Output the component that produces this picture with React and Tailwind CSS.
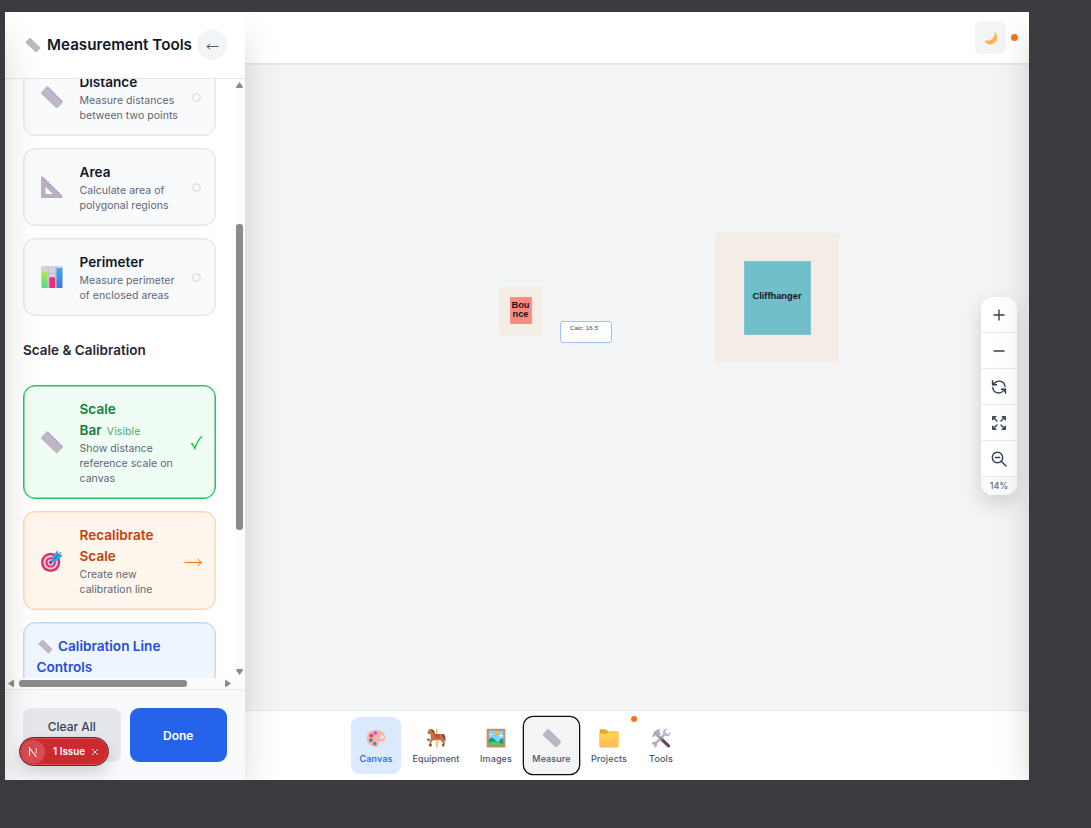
import React from "react";

const Ruler = ({ size = 24 }) => (
  <svg width={size} height={size} viewBox="0 0 32 32" className="shrink-0">
    <defs>
      <linearGradient id="rulerFill" x1="0" y1="1" x2="1" y2="0">
        <stop offset="0" stopColor="#b3aeb7" />
        <stop offset="1" stopColor="#c9c3d0" />
      </linearGradient>
    </defs>
    <path d="M1.6 9.6 8.4 2.2Q9.6 1 10.9 2L30.2 21.2Q31.2 22.4 30.2 23.6L23.6 30.2Q22.4 31.2 21.2 30.2L1.6 11.8Q.7 10.7 1.6 9.6Z" fill="url(#rulerFill)" />
    <path d="M10 3.6 29.2 22.6" stroke="#a57be6" strokeWidth="1.800" strokeDasharray="1.5 2.6" />
  </svg>
);

const Triangle = () => (
  <svg width="22" height="22" viewBox="0 0 32 32">
    <path fillRule="evenodd" d="M0 1.5Q0 0 1.5 .5L31.5 30Q32 32 30 32H1.5Q0 32 0 30.5ZM6.5 15.5V24.5Q6.5 26 8 26H17Z" fill="#b7b1bc" />
    <path d="M3.500 2.500 30.500 29" stroke="#9b6fe0" strokeWidth="2" strokeDasharray="1.8 2.6" />
  </svg>
);

const BarChart = () => (
  <svg width="22" height="22" viewBox="0 0 32 32">
    <defs>
      <linearGradient id="barGreen" x1="0" y1="0" x2="0" y2="1"><stop offset="0" stopColor="#b4e94e" /><stop offset="1" stopColor="#50d68f" /></linearGradient>
      <linearGradient id="barBlue" x1="0" y1="0" x2="0" y2="1"><stop offset="0" stopColor="#35b1f2" /><stop offset="1" stopColor="#4175d8" /></linearGradient>
    </defs>
    <rect width="32" height="32" rx="2" fill="#d7d0dd" />
    <path d="M0 10.500H32M0 21.500H32M10.500 0V32M21.500 0V32" stroke="#bcb4c5" strokeWidth="1" />
    <rect x="1" y="7.500" width="8.500" height="24.500" rx="1" fill="url(#barGreen)" />
    <rect x="12" y="16.500" width="8.500" height="15.500" rx="1" fill="#ec2d78" />
    <rect x="22.500" y="3" width="8.500" height="29" rx="1" fill="url(#barBlue)" />
  </svg>
);

const Target = () => (
  <svg width="22" height="22" viewBox="0 0 32 32">
    <circle cx="14" cy="18" r="14" fill="#e02f66" />
    <circle cx="14" cy="18" r="10.500" fill="#dccbe0" />
    <circle cx="14" cy="18" r="7.500" fill="#d92d63" />
    <circle cx="14" cy="18" r="4.500" fill="#dccbe0" />
    <circle cx="14" cy="18" r="2.200" fill="#b52456" />
    <path d="M14 18 23 9" stroke="#2576b8" strokeWidth="2.200" />
    <path d="M17 9 24 .5 25.500 6 32 7.500 22.500 16 16 16.500Z" fill="#2da2ee" />
    <path d="M19 13 29 3.500" stroke="#1e7bd0" strokeWidth="1.500" />
  </svg>
);

const Palette = () => (
  <svg width="20" height="20" viewBox="0 0 32 32">
    <path d="M16 3C7 3 1 8.500 1 16c0 8 6 14 14 14 4 0 5.500-2 5-5-.5-3.500 2-4.500 5-3.500 4 1.200 6-1.500 6-5C31 8.500 25 3 16 3Z" fill="#fbb3a2" />
    <circle cx="15" cy="8" r="2.900" fill="#b657d8" />
    <circle cx="8.500" cy="12" r="3" fill="#f0347f" />
    <circle cx="8" cy="19.500" r="3" fill="#2f9aa8" />
    <circle cx="14" cy="25" r="2.900" fill="#3a8be8" />
    <circle cx="25.500" cy="14.500" r="3.200" fill="#dbeafe" />
  </svg>
);

const Horse = () => (
  <svg width="20" height="20" viewBox="0 0 32 32">
    <rect x="16" y="1" width="2.400" height="30" fill="#f3c05c" />
    <path d="M4 3 7 1 11 3.500Q14 7 14.500 9.500L24 9.500Q28 9.500 28.500 14L28.500 19 30.500 24 28.500 29 26 29 27 24 23 19.500 12 19.500 8.500 22 9 29 6 29 5.500 22 8 17Q6.500 13 7.500 9.500L3.500 10 2.500 8Z" fill="#bb7549" />
    <path d="M8 1 12 3Q14.500 6 14.500 9.500L11 7ZM25 9Q31 9 31 16L31.500 22 28 18Z" fill="#80493c" />
    <path d="M13 9.500H22V16Q17 18 13.500 15Z" fill="#e0453a" />
    <path d="M4.500 26H9V29H5ZM25.500 26 29.500 26 29 29H25.500ZM2 17 7 17 5 20.500 2 20.500Z" fill="#80493c" />
    <rect x="16.200" y="18.500" width="2.200" height="12.500" fill="#f3c05c" />
  </svg>
);

const Picture = () => (
  <svg width="20" height="20" viewBox="0 0 32 32">
    <rect x="1" y="1" width="30" height="30" rx="1.500" fill="#cf8c62" />
    <rect x="4.500" y="4.500" width="23" height="23" fill="#7bd4fb" />
    <circle cx="17.500" cy="9" r="3.200" fill="#fcb92c" />
    <path d="M5 11Q8 7 11 11ZM20 13Q24 8 27.500 12V14Z" fill="#e9f8ff" />
    <path d="M4.500 18Q9 12 13.500 18L19 23 24 17Q26 16 27.500 18V27.500H4.500Z" fill="#1f9b78" />
    <path d="M4.500 24Q14 18 27.500 26V27.500H4.500Z" fill="#55c85f" />
  </svg>
);

const Folder = () => (
  <svg width="20" height="20" viewBox="0 0 32 32">
    <defs>
      <linearGradient id="folderFill" x1="0" y1="0" x2="0" y2="1"><stop offset="0" stopColor="#ffd84a" /><stop offset="1" stopColor="#fdb95e" /></linearGradient>
    </defs>
    <path d="M1 4Q1 2 3 2H11L14.500 5.500H29Q31 5.500 31 7.500V20H1Z" fill="#eba52b" />
    <path d="M.5 11Q.5 9 2.500 9H12L15.500 7H29.500Q31.500 7 31.500 9V29Q31.500 31 29.500 31H2.500Q.5 31 .5 29Z" fill="url(#folderFill)" />
  </svg>
);

const HammerWrench = () => (
  <svg width="20" height="20" viewBox="0 0 32 32">
    <path d="M6 26 23 9" stroke="#b8b1bf" strokeWidth="4.200" strokeLinecap="round" />
    <path d="M23 1Q18 4 19 9.500 22 14 27 13 32 11 31 6L27.500 9.500 23.500 8.500 22.500 5 26 1Z" fill="#bdb7c6" />
    <path d="M1 25 4 21.500 9 23 10 28 6 31 4.500 30 6.500 27 4 25 1.500 27Z" fill="#b0a9b8" />
    <path d="M17 18 28 28.500" stroke="#704258" strokeWidth="5" strokeLinecap="round" />
    <path d="M11 12 18 19" stroke="#9a91a2" strokeWidth="3.600" />
    <path d="M2 13 5 6Q9 1 15 2L13.500 5.500 15.500 10 10 15 7 11.500 4 15Z" fill="#b1aab9" />
  </svg>
);

const Moon = () => (
  <svg width="14" height="14" viewBox="0 0 32 32">
    <path d="M24 1Q26 12 18 18 11 23 1 21 7 31 18 30 29 28 30.500 17 31 7 24 1Z" fill="#f9bd5e" />
    <path d="M2 22Q10 31 19 29 14 31 9 29Q4 27 2 22Z" fill="#df9144" />
    <circle cx="25" cy="17" r="1.800" fill="#e49b4c" />
    <circle cx="18" cy="24" r="1.800" fill="#e49b4c" />
  </svg>
);

const Check = () => (
  <svg width="13" height="15" viewBox="0 0 13 15" className="shrink-0" fill="none" stroke="#22c55e">
    <path d="M.8 8.800 2.200 8.600 4.800 13.400Q7.500 5.500 12 1.200" strokeWidth="1.500" />
  </svg>
);

const RightArrow = () => (
  <svg width="19" height="9" viewBox="0 0 19 9" className="mt-[3px] shrink-0" fill="none" stroke="#f97316" strokeWidth="1">
    <path d="M.5 4.500H18M13.800 1Q15 3.800 18 4.500 15 5.200 13.800 8" />
  </svg>
);

const LeftArrow = () => (
  <svg width="13" height="7" viewBox="0 0 13 7" className="mt-[2px]" fill="none" stroke="#4b5563" strokeWidth="1">
    <path d="M12.500 3.500H1M3.700 .8Q3 3 .8 3.500 3 4 3.700 6.200" />
  </svg>
);

const Circle = () => <span className="mr-[2px] block h-[9px] w-[9px] shrink-0 rounded-full border border-[#dcdde1] shadow-[inset_0_0_0_0.5px_#dcdde1]" />;

function ToolCard({ icon, title, badge, text, tone, titleTone, mark }) {
  return (
    <div className={"relative flex w-[193px] shrink-0 items-center rounded-xl border p-[12.5px] " + tone}>
      <span className="flex w-[30px] shrink-0 justify-center">{icon}</span>
      <div className="ml-[13px] min-w-0 flex-1 whitespace-pre">
        <div className={"flex items-end text-[13.600px] leading-[21px] font-semibold " + titleTone}>
          <span>{title}</span>
          {badge}
        </div>
        <div className="text-[10.500px] leading-[15px] tracking-[0.05px] text-[#5d6674]">{text}</div>
      </div>
      {mark}
    </div>
  );
}

const neutral = "border-[#e5e7eb] bg-[#f9fafb] shadow-[inset_0_0_0_0.5px_#e5e7eb]";

function Sidebar() {
  return (
    <aside className="relative z-10 flex w-[240px] shrink-0 flex-col bg-white shadow-[0_19px_38px_-9px_rgba(0,0,0,0.25)]">
      <div className="flex h-[67px] shrink-0 items-center border-b border-[#e5e7eb] pl-[20px]">
        <Ruler size={16} />
        <h2 className="ml-[6px] w-[150px] text-[15.200px] font-semibold whitespace-nowrap text-[#111827]">Measurement Tools</h2>
        <button className="flex h-[30px] w-[30px] shrink-0 items-center justify-center rounded-full bg-[#f3f4f6]"><LeftArrow /></button>
      </div>

      <div className="flex h-[599px] shrink-0">
        <div className="flex flex-1 flex-col justify-start overflow-hidden pl-[18px]">
          <div className="-mt-[21px] flex flex-col gap-3">
            <ToolCard icon={<Ruler />} title="Distance" text={"Measure distances\nbetween two points"} tone={neutral} titleTone="text-[#111827]" mark={<Circle />} />
            <ToolCard icon={<Triangle />} title="Area" text={"Calculate area of\npolygonal regions"} tone={neutral} titleTone="text-[#111827]" mark={<Circle />} />
            <ToolCard icon={<BarChart />} title="Perimeter" text={"Measure perimeter\nof enclosed areas"} tone={neutral} titleTone="text-[#111827]" mark={<Circle />} />
          </div>
          <h3 className="mt-6 text-[13.500px] leading-[21px] font-semibold text-[#1f2937]">Scale &amp; Calibration</h3>
          <div className="mt-6 flex flex-col gap-3">
            <ToolCard
              icon={<Ruler />}
              title={"Scale\nBar"}
              badge={<span className="-ml-[9px] pb-[2px] text-[10.500px] leading-[15px] font-normal tracking-[0.1px] text-[#4caa70]">Visible</span>}
              text={"Show distance\nreference scale on\ncanvas"}
              tone="border-[#22c55e] bg-[#f0fdf4] shadow-[inset_0_0_0_0.5px_#22c55e]"
              titleTone="text-[#15803d]"
              mark={<Check />}
            />
            <ToolCard
              icon={<Target />}
              title={"Recalibrate\nScale"}
              text={"Create new\ncalibration line"}
              tone="border-[#fed7aa] bg-[#fff7ed] shadow-[inset_0_0_0_0.5px_#fed7aa]"
              titleTone="text-[#c2410c]"
              mark={<RightArrow />}
            />
            <div className="h-[120px] w-[193px] shrink-0 rounded-xl border border-[#bfdbfe] bg-[#eff6ff] p-[12.5px] text-[13.600px] leading-[21px] font-semibold text-[#1d4ed8] shadow-[inset_0_0_0_0.5px_#bfdbfe]">
              <div className="flex items-center gap-[5px] pl-[1.5px] whitespace-nowrap"><Ruler size={15} />Calibration Line</div>
              <div>Controls</div>
            </div>
          </div>
        </div>
        <div className="flex w-[11px] shrink-0 flex-col items-center bg-[#fcfcfc]">
          <svg width="7" height="6" viewBox="0 0 7 6" className="mt-[3px]"><path d="M3.500 0 7 5Q7 6 6 6H1Q0 6 0 5Z" fill="#8b8b8b" /></svg>
          <div className="mt-[136px] h-[306px] w-[7px] rounded-[3px] bg-[#8b8b8b]" />
          <svg width="7" height="6" viewBox="0 0 7 6" className="mt-[139px]"><path d="M3.500 6 7 1Q7 0 6 0H1Q0 0 0 1Z" fill="#8b8b8b" /></svg>
        </div>
      </div>
      <div className="flex h-[11px] shrink-0 items-center bg-[#fcfcfc] pl-[3px]">
        <svg width="6" height="7" viewBox="0 0 6 7"><path d="M0 3.500 5 0Q6 0 6 1V6Q6 7 5 7Z" fill="#8b8b8b" /></svg>
        <div className="ml-[5px] h-[7px] w-[168px] rounded-[3px] bg-[#8b8b8b]" />
        <svg width="6" height="7" viewBox="0 0 6 7" className="ml-[38px]"><path d="M6 3.500 1 0Q0 0 0 1V6Q0 7 1 7Z" fill="#8b8b8b" /></svg>
      </div>

      <div className="relative flex flex-1 gap-[9px] border-t border-[#e5e7eb] bg-[#f9fafb] px-[18px] pt-[18px]">
        <button className="flex h-[54px] flex-1 justify-center rounded-[9px] bg-[#e5e7eb] pt-[10px] text-[12px] leading-[18px] font-medium text-[#374151]">Clear All</button>
        <button className="h-[54px] flex-1 rounded-[9px] bg-[#2563eb] pt-[2px] text-[12px] font-semibold text-white">Done</button>
        <div className="absolute top-[47px] left-[14px] flex h-[29px] w-[90px] items-center rounded-full border border-[#65262c] bg-[#ca2a30] pl-[1px] text-white shadow-[0_8px_16px_rgba(0,0,0,0.16),inset_0_0_0_1px_#e5484d]">
          <span className="flex h-6 w-6 items-center justify-center rounded-full bg-[#d64b51]">
            <svg width="12" height="12" viewBox="0 0 12 12" fill="none" stroke="white" strokeWidth="1.100">
              <path d="M2.500 10V2L9.500 11" />
              <path d="M9.300 2V7.500" strokeOpacity=".75" />
            </svg>
          </span>
          <span className="mt-px ml-[8px] text-[9.750px] font-semibold tracking-[0.05px] whitespace-nowrap">1 Issue</span>
          <svg width="8" height="8" viewBox="0 0 8 8" stroke="#ffd9da" strokeWidth="1" className="ml-[6px]"><path d="M1 1 7 7M7 1 1 7" /></svg>
        </div>
      </div>
    </aside>
  );
}

function NavItem({ icon, label, box }) {
  return (
    <div className={"flex flex-col items-center rounded-[9px] pt-[11px] " + box}>
      {icon}
      <span className="mt-[3.5px] text-[9px] leading-[14px] font-medium tracking-[0.12px]">{label}</span>
    </div>
  );
}

function BottomNav() {
  return (
    <nav className="relative h-[70px] shrink-0 border-t border-[#e7e9ec] bg-white text-[#4b5563]">
      <div className="mt-[6px] ml-[106px] flex h-[57px] gap-[3px]">
        <NavItem icon={<Palette />} label="Canvas" box="w-[50px] bg-[#dbeafe] text-[#2563eb]" />
        <NavItem icon={<Horse />} label="Equipment" box="w-[64px]" />
        <NavItem icon={<Picture />} label="Images" box="w-[50px]" />
        <NavItem icon={<Ruler size={20} />} label="Measure" box="w-[55px] bg-[#f3f4f6] shadow-[0_0_0_1.3px_#101010]" />
        <NavItem icon={<Folder />} label="Projects" box="w-[54px]" />
        <NavItem icon={<HammerWrench />} label="Tools" box="w-[44px]" />
      </div>
      <span className="absolute top-[4.5px] left-[386px] h-[6px] w-[6px] rounded-full bg-[#f97316]" />
    </nav>
  );
}

const iconProps = { width: 16, height: 16, viewBox: "0 0 16 16", fill: "none", stroke: "#334155", strokeWidth: 1.4, strokeLinecap: "round", strokeLinejoin: "round" };

function ZoomControls() {
  const cell = "flex h-[36px] items-center justify-center border-b border-[#e8eaed]";
  return (
    <div className="absolute top-[232px] left-[736px] w-[36px] overflow-visible rounded-xl shadow-[0_8px_19px_rgba(0,0,0,0.15)]">
      <div className="overflow-hidden rounded-xl bg-white">
        <div className={cell}><svg {...iconProps}><path d="M8 3V13M3 8H13" /></svg></div>
        <div className={cell}><svg {...iconProps}><path d="M3 8H13" /></svg></div>
        <div className={cell}>
          <svg {...iconProps}>
            <path d="M3.600 4.300A5.900 5.900 0 0 1 14 7.500M1.800 8.500A5.900 5.900 0 0 0 12.200 11.900" />
            <path d="M1.500 1.800V5.800H5.500M14.500 14.200V10.200H10.500" />
            <path d="M1.500 3V5.800H4.300ZM14.500 13V10.200H11.700Z" fill="#334155" strokeWidth="0.700" />
          </svg>
        </div>
        <div className={cell}>
          <svg {...iconProps}>
            <path d="M3 3 6 6M13 3 10 6M3 13 6 10M13 13 10 10" />
            <path d="M1.500 4.800V1.500H4.800ZM11.200 1.500H14.500V4.800ZM1.500 11.200V14.500H4.800ZM11.200 14.500H14.500V11.200Z" fill="#334155" strokeWidth="0.900" />
          </svg>
        </div>
        <div className={cell}><svg {...iconProps}><circle cx="6.500" cy="6.500" r="5.200" /><path d="M4.200 6.500H8.800M10.500 10.500 15 15" /></svg></div>
        <div className="flex h-[18px] items-center justify-center bg-[#f9fafb] text-[9px] font-medium text-[#64707f]">14%</div>
      </div>
    </div>
  );
}

function Canvas() {
  return (
    <div className="relative flex-1 bg-[#f3f4f6] text-[#161616]">
      <div className="absolute top-[221.500px] left-[254px] flex h-[48px] w-[43px] items-center justify-center bg-[#f3ede6]">
        <div className="flex h-[27px] w-[22px] items-center justify-center border border-[#f9908a] bg-[#ff8981] pb-[1px] text-center font-['Liberation_Sans',sans-serif] text-[9.300px] leading-[9px] font-bold">Bou<br />nce</div>
      </div>
      <div className="absolute top-[255.500px] left-[315px] h-[22px] w-[52px] rounded-[3px] border border-[#9fc0f8] bg-white pt-[2px] pr-[3px] text-center font-['Liberation_Sans',sans-serif] text-[6.200px] leading-[8px] text-[#444]">Calc: 16.5'</div>
      <div className="absolute top-[167.500px] left-[470px] flex h-[130px] w-[124px] items-center justify-center bg-[#f3ede6]">
        <div className="flex h-[74px] w-[67px] items-center justify-center border border-[#84c3cb] bg-[#71bfcb] pb-[1px] font-['Liberation_Sans',sans-serif] text-[9.300px] font-bold">Cliffhanger</div>
      </div>
      <ZoomControls />
    </div>
  );
}

export default function App() {
  return (
    <div className="h-[828px] w-[1091px] overflow-hidden bg-[#3b3a3e] pt-3 pl-[5px] font-['Inter',sans-serif]">
      <div className="relative flex h-[768px] w-[1024px] overflow-hidden bg-white">
        <Sidebar />
        <main className="flex flex-1 flex-col">
          <header className="flex h-[53px] shrink-0 items-center justify-end border-b-2 border-[#e4e6e9] bg-white pr-[11px]">
            <button className="flex h-[33px] w-[31px] items-center justify-center rounded-md bg-[#f3f4f6]"><Moon /></button>
            <span className="ml-[5px] h-[7px] w-[7px] rounded-full bg-[#f97316]" />
          </header>
          <Canvas />
          <BottomNav />
        </main>
        <div className="pointer-events-none absolute top-0 right-full z-20 h-full w-[240px] shadow-[0_19px_38px_-9px_rgba(0,0,0,0.25)]" />
        <div className="pointer-events-none absolute top-0 left-full z-20 h-full w-[240px] shadow-[0_19px_38px_-9px_rgba(0,0,0,0.25)]" />
      </div>
    </div>
  );
}
